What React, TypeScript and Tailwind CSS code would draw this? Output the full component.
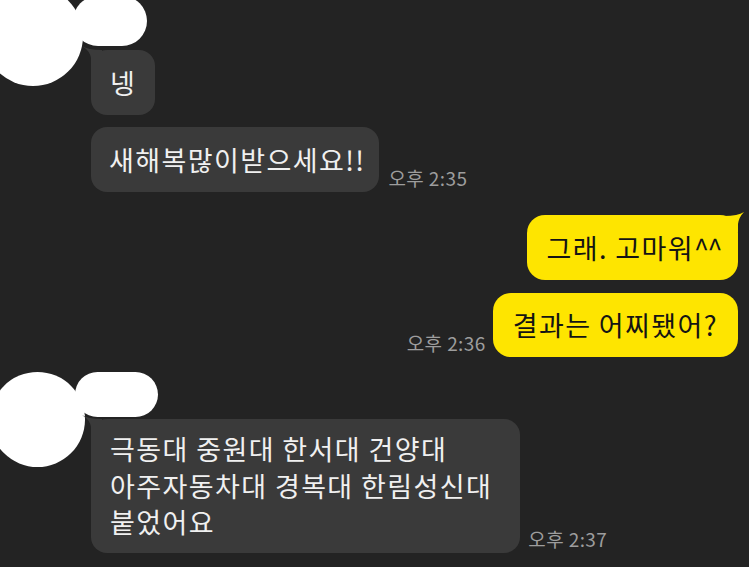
function TailLeft() {
  return (
    <svg className="absolute left-[-9px] top-[-4px]" width="20" height="20" viewBox="0 0 20 20">
      <path d="M0 0 Q6 4 20 4 L20 20 L9 20 L9 12 Q8 5 0 0 Z" fill="#3a3a3a" />
    </svg>
  );
}

function TailRight() {
  return (
    <svg className="absolute right-[-6px] top-[-3px]" width="20" height="20" viewBox="0 0 20 20">
      <path d="M20 0 Q14 4 0 4 L0 20 L14 20 L14 12 Q15 5 20 0 Z" fill="#fee500" />
    </svg>
  );
}

function Time({ text }: { text: string }) {
  return <span className="text-[19px] leading-[20px] tracking-[0.4px] text-[#9d9d9d] whitespace-nowrap">{text}</span>;
}

export default function App() {
  return (
    <div className="w-[749px] h-[567px] bg-[#232323] overflow-hidden font-['Noto_Sans_CJK_KR',sans-serif]">
      {/* received 1 */}
      <div className="relative pt-[50px] pl-[91px]">
        <div className="absolute left-[-17px] top-[-14px] w-[100px] h-[100px] rounded-full bg-white" />
        <div className="absolute left-[73px] top-[-4px] w-[74px] h-[50px] rounded-full bg-white" />
        <div className="flex">
          <div className="relative bg-[#3a3a3a] rounded-[16px] px-[19px] py-[14px] text-[27px] tracking-[1.4px] leading-[37px] text-[#f0f0f0]">
            <TailLeft />
            <span className="relative">넹</span>
          </div>
        </div>
        <div className="flex items-end gap-[9px] mt-[12px]">
          <div className="bg-[#3a3a3a] rounded-[16px] pl-[18px] pr-[14px] py-[14px] text-[27px] tracking-[1.4px] leading-[37px] text-[#f0f0f0] whitespace-nowrap">
            새해복많이받으세요!!
          </div>
          <div className="mb-[1px]">
            <Time text="오후 2:35" />
          </div>
        </div>
      </div>

      {/* sent */}
      <div className="flex flex-col items-end pr-[11px] mt-[23px]">
        <div className="relative bg-[#fee500] rounded-[18px] pl-[19px] pr-[17px] py-[14px] text-[27px] tracking-[1.4px] leading-[37px] text-[#141414] whitespace-nowrap">
          <TailRight />
          <span className="relative">
            그래. 고마워<span className="tracking-[-1.5px]">^^</span>
          </span>
        </div>
        <div className="flex items-end gap-[7px] mt-[13px]">
          <div className="mb-[1px]">
            <Time text="오후 2:36" />
          </div>
          <div className="bg-[#fee500] rounded-[18px] px-[20px] py-[14px] text-[27px] tracking-[1.4px] leading-[36px] text-[#141414] whitespace-nowrap">
            결과는 어찌됐어?
          </div>
        </div>
      </div>

      {/* received 2 */}
      <div className="relative pt-[62px] pl-[91px]">
        <div className="absolute left-[-10px] top-[15px] w-[95px] h-[95px] rounded-full bg-white" />
        <div className="absolute left-[75px] top-[15px] w-[83px] h-[45px] rounded-full bg-white" />
        <div className="flex items-end gap-[8px]">
          <div className="relative bg-[#3a3a3a] rounded-[16px] pl-[19px] pr-[28px] py-[12px] text-[27px] tracking-[1.4px] leading-[36.5px] text-[#f0f0f0] whitespace-nowrap">
            <TailLeft />
            <span className="relative">
              극동대 중원대 한서대 건양대
              <br />
              아주자동차대 경복대 한림성신대
              <br />
              붙었어요
            </span>
          </div>
          <div className="mb-[1px]">
            <Time text="오후 2:37" />
          </div>
        </div>
      </div>
    </div>
  );
}
